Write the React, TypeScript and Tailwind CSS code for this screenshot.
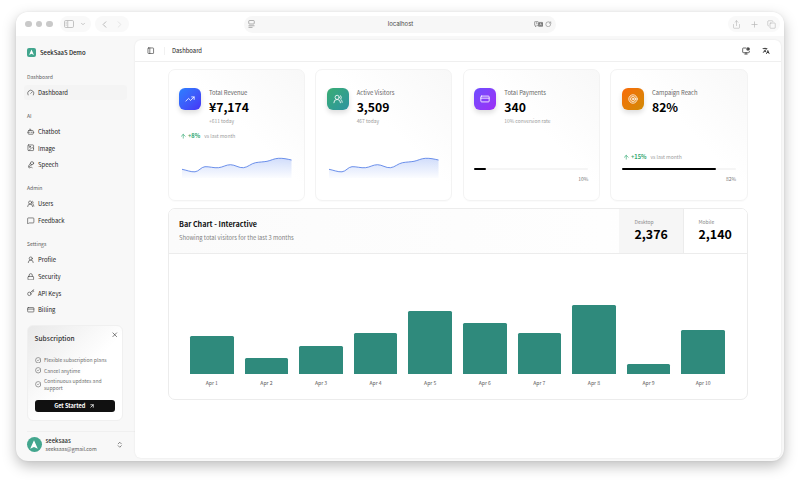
import {
  ArrowUp,
  ArrowUpRight,
  Bot,
  ChevronDown,
  ChevronLeft,
  ChevronRight,
  ChevronsUpDown,
  CircleCheck,
  Copy,
  CreditCard,
  Gauge,
  Image,
  Key,
  Lock,
  MessageSquare,
  MicVocal,
  MonitorCog,
  PanelLeft,
  Plus,
  RotateCw,
  Share,
  Target,
  TrendingUp,
  UserRound,
  UsersRound,
  X,
} from "lucide-react";
import { RiTranslate2 } from "react-icons/ri";

const nav = [
  {
    label: "Dashboard",
    items: [{ name: "Dashboard", icon: Gauge, active: true }],
  },
  {
    label: "AI",
    items: [
      { name: "Chatbot", icon: Bot },
      { name: "Image", icon: Image },
      { name: "Speech", icon: MicVocal },
    ],
  },
  {
    label: "Admin",
    items: [
      { name: "Users", icon: UsersRound },
      { name: "Feedback", icon: MessageSquare },
    ],
  },
  {
    label: "Settings",
    items: [
      { name: "Profile", icon: UserRound },
      { name: "Security", icon: Lock },
      { name: "API Keys", icon: Key },
      { name: "Billing", icon: CreditCard },
    ],
  },
];

const bars = [
  { day: "Apr 1", value: 37.5 },
  { day: "Apr 2", value: 16 },
  { day: "Apr 3", value: 28 },
  { day: "Apr 4", value: 40.5 },
  { day: "Apr 5", value: 63 },
  { day: "Apr 6", value: 50.8 },
  { day: "Apr 7", value: 41 },
  { day: "Apr 8", value: 69 },
  { day: "Apr 9", value: 9.6 },
  { day: "Apr 10", value: 44 },
];

function Mark({ className }: any) {
  return (
    <svg viewBox="0 0 24 24" className={className} fill="#fff">
      <path d="M12 4 L18.5 18.5 L12 15.6 L5.5 18.5 Z" />
    </svg>
  );
}

function TitleBar() {
  return (
    <div className="flex h-6 shrink-0 items-center bg-white pr-[4px] pl-[9px] text-[#b5b5b5]">
      <div className="flex gap-1">
        <div className="size-[6.5px] rounded-full bg-[#c9c9c9]" />
        <div className="size-[6.5px] rounded-full bg-[#c9c9c9]" />
        <div className="size-[6.5px] rounded-full bg-[#c9c9c9]" />
      </div>
      <div className="ml-[7px] flex h-4 w-[31px] items-center justify-center gap-[6px] rounded-full bg-[#f9f9f9]">
        <svg viewBox="0 0 20 16" className="h-[8px] w-[10px]" fill="none" stroke="currentColor" strokeWidth="1.6">
          <rect x="1" y="1" width="18" height="14" rx="2.5" />
          <path d="M7.5 1v14M3.3 4.5h2M3.3 7.5h2M3.3 10.5h2" />
        </svg>
        <ChevronDown className="size-[6px]" strokeWidth={3} />
      </div>
      <div className="ml-[4px] flex h-4 w-[34px] items-center justify-between rounded-full bg-[#f9f9f9] px-1">
        <ChevronLeft className="size-[11px]" />
        <ChevronRight className="size-[11px] text-[#e3e3e3]" />
      </div>
      <div className="ml-[115px] flex h-[17px] w-[312px] items-center rounded-full bg-[#f7f7f7] px-[4px]">
        <svg viewBox="0 0 14 16" className="h-[8px] w-[7px]" fill="none" stroke="#8e8e8e" strokeWidth="1.4">
          <rect x="1.5" y="1" width="11" height="7" rx="1.5" />
          <path d="M1 11.5h12M1 14.8h8" />
        </svg>
        <span className="flex-1 pl-[13px] text-center font-[Inter,sans-serif] text-[6px] leading-[8px] text-[#4a4a4a]">
          localhost
        </span>
        <svg viewBox="0 0 20 14" className="h-[6.5px] w-[9.5px]" fill="none" stroke="#777" strokeWidth="1.4">
          <path d="M8 10H5.5L3 12.5V10H2.5A1.5 1.5 0 0 1 1 8.5V2.5A1.5 1.5 0 0 1 2.5 1H9" />
          <path d="M3 4h4M5 3v1.5M6.5 4C6 6 5 7 3.5 7.5" strokeWidth="1" />
          <rect x="9" y="3" width="10" height="8.5" rx="1.5" fill="#777" />
          <path d="M12 9.5 14 5l2 4.5M12.7 8h2.6" stroke="#f7f7f7" strokeWidth="1" />
        </svg>
        <RotateCw className="ml-[2px] size-[6.5px] text-[#777]" />
      </div>
      <div className="ml-auto flex h-4 w-[52px] items-center justify-between rounded-full bg-[#f9f9f9] px-[4px]">
        <Share className="size-[9px]" strokeWidth={1.6} />
        <Plus className="size-[9px]" strokeWidth={1.8} />
        <Copy className="size-[9px]" strokeWidth={1.6} />
      </div>
    </div>
  );
}

function Sidebar() {
  return (
    <aside className="flex w-[119px] shrink-0 flex-col">
      <div className="mt-[11px] flex h-[10px] shrink-0 items-center pl-[11px]">
        <div className="flex size-[9px] items-center justify-center rounded-[2px] bg-[#43a68e]">
          <Mark className="size-[9px]" />
        </div>
        <span className="ml-1 text-[5.9px] leading-[11px] font-medium text-[#222]">SeekSaaS Demo</span>
      </div>

      <nav className="mt-[13.5px] flex flex-col gap-[9.8px]">
        {nav.map((group) => (
          <div key={group.label} className="pl-[8px]">
            <div className="h-[14.3px] pl-[3px] text-[5.1px] leading-[12px] text-[#5c5c5c]">{group.label}</div>
            <div className="flex flex-col gap-[1.7px]">
              {group.items.map((item: any) => (
                <div
                  key={item.name}
                  className={
                    item.active
                      ? "mr-[8px] flex h-[15px] items-center rounded-[3px] bg-[#f4f4f4] pl-[3px]"
                      : "mr-[8px] flex h-[15px] items-center rounded-[3px] pl-[3px]"
                  }
                >
                  <item.icon className="size-[7.5px] text-[#444]" strokeWidth={2} />
                  <span className="ml-[3.5px] text-[5.9px] leading-[15px] text-[#222]">{item.name}</span>
                </div>
              ))}
            </div>
          </div>
        ))}
      </nav>

      <div className="mt-auto mr-[12px] ml-[10.5px] h-[95.5px] shrink-0 rounded-[6px] border border-[#f0f0f0] bg-gradient-to-br from-[#e9e9e9] via-white via-55% to-white px-[7px] pt-[4px]">
        <div className="flex h-[16px] items-start justify-between">
          <span className="pt-[2.5px] text-[6.6px] leading-[11px] font-medium text-[#333]">Subscription</span>
          <X className="mt-[1px] -mr-[3px] size-[7.5px] text-[#333]" />
        </div>
        <div className="mt-[8.5px] flex flex-col text-[5.05px] leading-[7px] text-[#6f6f6f]">
          <div className="flex h-[10.7px] items-center gap-[3px]">
            <CircleCheck className="size-[6.5px] text-[#555]" />
            Flexible subscription plans
          </div>
          <div className="flex h-[10.7px] items-center gap-[3px]">
            <CircleCheck className="size-[6.5px] text-[#555]" />
            Cancel anytime
          </div>
          <div className="flex h-[17px] items-center gap-[3px]">
            <CircleCheck className="size-[6.5px] shrink-0 text-[#555]" />
            <span className="w-[62px] leading-[7.5px]">Continuous updates and support</span>
          </div>
        </div>
        <div className="mt-[7.5px] flex h-[12px] items-center justify-center gap-[4px] rounded-[3px] bg-[#111] text-[5.6px] leading-[12px] font-bold text-white">
          Get Started
          <ArrowUpRight className="size-[6px]" strokeWidth={3} />
        </div>
      </div>

      <div className="mt-[10.5px] mb-[4px] ml-[10.5px] flex h-[26px] shrink-0 items-center border-t border-[#f0f0f0]">
        <div className="flex size-[15px] items-center justify-center rounded-full bg-[#43a68e]">
          <Mark className="size-[14px]" />
        </div>
        <div className="ml-[4px] flex-1">
          <div className="text-[5.9px] leading-[8px] font-medium text-[#2a2a2a]">seeksaas</div>
          <div className="text-[5.1px] leading-[8px] text-[#555]">seeksaas@gmail.com</div>
        </div>
        <ChevronsUpDown className="mr-[11.5px] size-[7.5px] text-[#444]" />
      </div>
    </aside>
  );
}

function Spark({ id }: any) {
  const line =
    "M0 14.3 C4 15 9 17.2 13 16.8 C17 16.4 19 12 23 11.7 C27 11.4 32 13.2 36.5 12.7 C41 12.2 44 9.7 48.5 9.7 C53 9.7 57 13.2 61.5 12.7 C66 12.2 69 8.5 73.5 7.7 C78 6.9 81 7 85 6.3 C89 5.5 92 3.5 96.5 3.3 C101 3.1 105 4 109.5 5";
  return (
    <svg viewBox="0 0 110 24" className="h-[24px] w-[110px]" fill="none">
      <defs>
        <linearGradient id={id} x1="0" y1="0" x2="0" y2="1">
          <stop offset="0" stopColor="#4f7df0" stopOpacity="0.26" />
          <stop offset="1" stopColor="#4f7df0" stopOpacity="0.02" />
        </linearGradient>
      </defs>
      <path d={`${line} V23 H0 Z`} fill={`url(#${id})`} />
      <path d={line} stroke="#5b83e8" strokeWidth="0.9" />
    </svg>
  );
}

function Trend({ value }: any) {
  return (
    <div className="flex h-[8px] items-center pl-[1px] text-[5px] leading-[8px] text-[#9a9a9a]">
      <ArrowUp className="size-[6.5px] text-[#31a872]" strokeWidth={2.4} />
      <span className="mr-[4px] ml-[1.5px] text-[5.7px] font-bold text-[#31a872]">{value}</span>
      vs last month
    </div>
  );
}

function Progress({ value, width }: any) {
  return (
    <div className="mt-[6.5px]">
      <div className="h-[2px] rounded-full bg-[#f5f5f5]">
        <div className="h-[2px] rounded-full bg-black" style={{ width: width }} />
      </div>
      <div className="mt-[5px] h-[8px] text-right text-[5px] leading-[8px] text-[#777]">{value}</div>
    </div>
  );
}

function StatCard({ icon: Icon, color, title, value, sub, top, children }: any) {
  return (
    <div className="flex h-[132.5px] min-w-0 flex-1 flex-col rounded-[7px] border border-[#f3f3f3] bg-gradient-to-bl from-[#f8f8f8] via-white via-45% to-white px-[10.5px] pt-[18px] pb-[17.5px] shadow-[0_1px_1px_rgba(0,0,0,0.02)]">
      <div className="flex">
        <div className={`flex size-[22px] items-center justify-center rounded-[6px] text-white shadow-[0_3px_5px_rgba(0,0,0,0.13)] ${color}`}>
          <Icon className="size-[10px]" />
        </div>
        <div className="ml-[8px]">
          <div className="h-[9px] text-[5.85px] leading-[9px] text-[#666]">{title}</div>
          <div className="mt-[1px] h-[18px] text-[12.2px] leading-[18px] font-bold text-black">{value}</div>
          <div className="mt-[1px] h-[8px] text-[4.9px] leading-[8px] text-[#999]">{sub}</div>
        </div>
      </div>
      {top && <div className="mt-[7.5px]">{top}</div>}
      <div className="mt-auto">{children}</div>
    </div>
  );
}

function ChartTab({ label, value, className }: any) {
  return (
    <div className={`pt-[9.5px] ${className}`}>
      <div className="text-[5px] leading-[8px] text-[#8a8a8a]">{label}</div>
      <div className="text-[12.4px] leading-[17px] font-bold text-black">{value}</div>
    </div>
  );
}

function ChartCard() {
  return (
    <div className="mt-[6.5px] flex h-[192px] flex-col overflow-hidden rounded-[7px] border border-[#ececec] bg-white">
      <div className="flex h-[45px] shrink-0 border-b border-[#ececec] bg-gradient-to-r from-[#fbfbfb] to-white">
        <div className="flex-1 pt-[9.5px] pl-[10.5px]">
          <div className="text-[7.2px] leading-[12px] font-bold text-[#111]">Bar Chart - Interactive</div>
          <div className="mt-[2px] text-[5.8px] leading-[12px] text-[#7f7f7f]">Showing total visitors for the last 3 months</div>
        </div>
        <ChartTab label="Desktop" value="2,376" className="w-[65px] border-r border-[#ececec] bg-[#f6f6f6] pl-[16px]" />
        <ChartTab label="Mobile" value="2,140" className="w-[63px] bg-white pl-[15px]" />
      </div>
      <div className="flex h-[120px] items-end gap-[11px] pr-[21.5px] pl-[21.5px]">
        {bars.map((bar) => (
          <div key={bar.day} className="flex-1 rounded-t-[1.5px] bg-[#2f8a7c]" style={{ height: bar.value }} />
        ))}
      </div>
      <div className="mt-[5px] flex gap-[11px] pr-[21.5px] pl-[21.5px]">
        {bars.map((bar) => (
          <div key={bar.day} className="flex-1 text-center text-[5.1px] leading-[8px] text-[#5c5c5c]">
            {bar.day}
          </div>
        ))}
      </div>
    </div>
  );
}

function App() {
  return (
    <div className="h-[481px] w-[800px] overflow-hidden bg-white px-4 pt-3 font-['Noto_Sans_CJK_SC',sans-serif]">
      <div className="flex h-[449px] w-[768px] flex-col overflow-hidden rounded-[12px] bg-[#f8f8f8] shadow-[0_5px_14px_rgba(0,0,0,0.26),0_0_2px_rgba(0,0,0,0.08)]">
        <TitleBar />
        <div className="flex min-h-0 flex-1">
          <Sidebar />
          <main className="mt-[4px] mr-[3px] mb-[3px] flex-1 rounded-[6px] bg-white shadow-[0_0_2px_rgba(0,0,0,0.09)]">
            <header className="flex h-[22px] items-center border-b border-[#efefef] pr-[11.5px] pl-[12px]">
              <PanelLeft className="size-[7.5px] text-[#333]" />
              <div className="ml-[9.5px] h-[8px] w-px bg-[#f1f1f1]" />
              <span className="ml-[7px] text-[5.9px] leading-[10px] text-[#222]">Dashboard</span>
              <MonitorCog className="ml-auto size-[8px] text-[#222]" />
              <RiTranslate2 className="ml-[12px] size-[8px] text-[#222]" />
            </header>
            <div className="pt-[6.5px] pr-[33.5px] pl-[32.5px]">
              <div className="flex gap-[10.6px]">
                <StatCard
                  icon={TrendingUp}
                  color="bg-gradient-to-br from-[#2b7fff] to-[#4630f5]"
                  title="Total Revenue"
                  value="¥7,174"
                  sub="+611 today"
                  top={<Trend value="+8%" />}
                >
                  <div className="mb-[4px] pl-[2.5px]">
                    <Spark id="revenue" />
                  </div>
                </StatCard>
                <StatCard
                  icon={UsersRound}
                  color="bg-gradient-to-br from-[#3aad72] to-[#2f93a0]"
                  title="Active Visitors"
                  value="3,509"
                  sub="467 today"
                >
                  <div className="mb-[4px] pl-[2.5px]">
                    <Spark id="visitors" />
                  </div>
                </StatCard>
                <StatCard
                  icon={CreditCard}
                  color="bg-gradient-to-br from-[#6d4cff] to-[#9d2df5]"
                  title="Total Payments"
                  value="340"
                  sub="10% conversion rate"
                >
                  <Progress value="10%" width="10%" />
                </StatCard>
                <StatCard
                  icon={Target}
                  color="bg-gradient-to-br from-[#f96a0a] to-[#d08a06]"
                  title="Campaign Reach"
                  value="82%"
                >
                  <Trend value="+15%" />
                  <Progress value="82%" width="82%" />
                </StatCard>
              </div>
              <ChartCard />
            </div>
          </main>
        </div>
      </div>
    </div>
  );
}

export default App;
